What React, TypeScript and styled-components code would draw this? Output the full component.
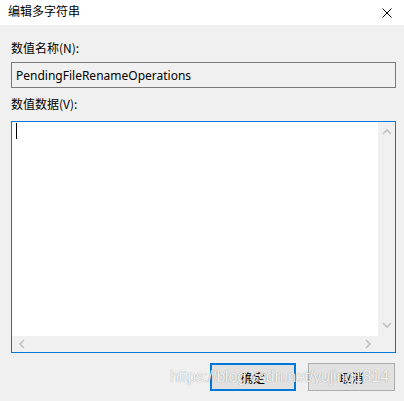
import React from "react";
import styled, { createGlobalStyle } from "styled-components";

const Global = createGlobalStyle`
  html, body { margin: 0; padding: 0; }
  body {
    width: 404px; height: 401px; overflow: hidden;
    background: #f0f0f0;
    font-family: "Noto Sans", "Noto Sans CJK SC", sans-serif;
    font-size: 12px; color: #000;
  }
`;

const Dialog = styled.div`
  position: relative;
  width: 404px; height: 401px;
  display: flex; flex-direction: column;
  background: #f0f0f0;
`;

const TitleBar = styled.div`
  height: 25px; background: #fff;
  display: flex; align-items: center; justify-content: space-between;
  padding: 0 12px 0 8px;
`;

const Title = styled.span`
  font-family: "Noto Sans CJK SC", sans-serif;
  font-size: 12px; line-height: 16px; color: #000;
  margin-top: -3px;
`;

const Body = styled.div`
  display: flex; flex-direction: column;
  padding: 0 8px 0 11px;
`;

const Label = styled.div<{ $top: number }>`
  font-family: "Noto Sans CJK SC", sans-serif;
  font-size: 12px; line-height: 16px;
  margin-top: ${(p) => p.$top}px;
  color: #000;
`;

const NameBox = styled.div`
  margin-top: 6px;
  height: 24px; border: 1px solid #7a7a7a; background: #f0f0f0;
  display: flex; align-items: center; padding-left: 4px;
  font-family: "Noto Sans", sans-serif; font-size: 12px;
`;

const DataBox = styled.div`
  margin-top: 9px;
  height: 230px; border: 1px solid #0078d7; background: #fff;
  display: grid;
  grid-template-columns: 1fr 17px;
  grid-template-rows: 1fr 16px;
`;

const TextArea = styled.div`
  position: relative;
  background: #fff;
`;

const Caret = styled.div`
  position: absolute; left: 4px; top: 1px;
  width: 1px; height: 16px; background: #000;
`;

const VScroll = styled.div`
  background: #f0f0f0;
  display: flex; flex-direction: column; justify-content: space-between; align-items: center;
  padding: 6px 0 7px;
`;

const HScroll = styled.div`
  background: #f0f0f0;
  display: flex; justify-content: space-between; align-items: center;
  padding: 0 6px 0 6px;
`;

const Corner = styled.div`
  background: #f0f0f0;
`;

const Arrow = ({ dir }: { dir: "up" | "down" | "left" | "right" }) => {
  const pts = {
    up: "1,6 5,2 9,6",
    down: "1,2 5,6 9,2",
    left: "6,1 2,5 6,9",
    right: "2,1 6,5 2,9",
  }[dir];
  const horiz = dir === "up" || dir === "down";
  return (
    <svg width={horiz ? 10 : 8} height={horiz ? 8 : 10} viewBox={horiz ? "0 0 10 8" : "0 0 8 10"}>
      <polyline points={pts} fill="none" stroke="#c0c0c0" strokeWidth="1.6" />
    </svg>
  );
};

const Buttons = styled.div`
  display: flex; justify-content: flex-end; gap: 12px;
  margin-top: 10px; padding-right: 1px;
`;

const Button = styled.div<{ $primary?: boolean }>`
  width: ${(p) => (p.$primary ? 82 : 85)}px; height: ${(p) => (p.$primary ? 24 : 26)}px;
  border: ${(p) => (p.$primary ? "2px solid #0078d7" : "1px solid #adadad")};
  background: #e1e1e1;
  display: flex; align-items: center; justify-content: center;
  font-family: "Noto Sans CJK SC", sans-serif; font-size: 12px;
`;

const Watermark = styled.div`
  position: absolute; left: 170px; top: 368px;
  font-family: "Liberation Sans", Arial, sans-serif; font-size: 16px;
  color: rgba(255, 255, 255, 0.9);
  text-shadow: 0 0 1px rgba(0, 0, 0, 0.45);
  letter-spacing: -0.2px;
  pointer-events: none;
`;

const CloseIcon = () => (
  <svg width="10" height="10" viewBox="0 0 10 10">
    <path d="M0.5 0.5 L9.5 9.5 M9.5 0.5 L0.5 9.5" stroke="#000" strokeWidth="1" />
  </svg>
);

export default function App() {
  return (
    <Dialog>
      <Global />
      <TitleBar>
        <Title>编辑多字符串</Title>
        <CloseIcon />
      </TitleBar>
      <Body>
        <Label $top={15}>数值名称(N):</Label>
        <NameBox>PendingFileRenameOperations</NameBox>
        <Label $top={8}>数值数据(V):</Label>
        <DataBox>
          <TextArea>
            <Caret />
          </TextArea>
          <VScroll>
            <Arrow dir="up" />
            <Arrow dir="down" />
          </VScroll>
          <HScroll>
            <Arrow dir="left" />
            <Arrow dir="right" />
          </HScroll>
          <Corner />
        </DataBox>
        <Buttons>
          <Button $primary>确定</Button>
          <Button>取消</Button>
        </Buttons>
      </Body>
      <Watermark>https://blog.csdn.net/yujing1314</Watermark>
    </Dialog>
  );
}
